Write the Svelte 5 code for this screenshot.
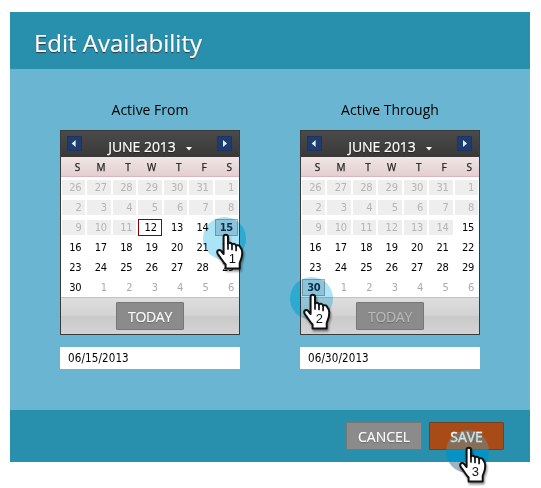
<script>
  const week = ['S', 'M', 'T', 'W', 'T', 'F', 'S'];
  const days = [26, 27, 28, 29, 30, 31, ...Array.from({ length: 30 }, (_, i) => i + 1), 1, 2, 3, 4, 5, 6];
  const calendars = [
    { label: 'Active From', date: '06/15/2013', past: 17, today: 17, selected: 20, disabled: false },
    { label: 'Active Through', date: '06/30/2013', past: 20, today: -1, selected: 35, disabled: true }
  ];
  const pointers = [
    { n: 1, x: 203, y: 217 },
    { n: 2, x: 290, y: 277 },
    { n: 3, x: 446, y: 430 }
  ];
</script>

<div class="page">
  <div class="dialog">
    <header><h1>Edit Availability</h1></header>
    <main>
      {#each calendars as c}
        <section>
          <div class="label">{c.label}</div>
          <div class="calendar">
            <div class="month">
              <button class="nav"><svg width="15" height="15"><path d="M8.6 4v7L4.7 7.5z" fill="#eee" /></svg></button>
              <span class="title">JUNE 2013<svg width="6" height="4"><path d="M0 0h6L3 3.5z" fill="#fff" /></svg></span>
              <button class="nav"><svg width="15" height="15"><path d="M6 4v7l4-3.5z" fill="#eee" /></svg></button>
            </div>
            <div class="week">{#each week as w}<span>{w}</span>{/each}</div>
            <div class="days">
              {#each days as d, i}
                <div class="slot">
                  <span class:past={i < c.past || (c.disabled && i < 20)} class:next={i > 35} class:today={i === c.today} class:selected={i === c.selected}>{d}</span>
                </div>
              {/each}
            </div>
            <div class="bottom"><button class="btn now" class:disabled={c.disabled}>TODAY</button></div>
          </div>
          <div class="input">{c.date}</div>
        </section>
      {/each}
    </main>
    <footer>
      <button class="btn">CANCEL</button>
      <button class="btn save">SAVE</button>
    </footer>
  </div>
  {#each pointers as p}
    <div class="disc disc{p.n}" style="left:{p.x}px;top:{p.y}px"></div>
    <div class="pointer" style="left:{p.x}px;top:{p.y}px">
      <svg width="54" height="62" viewBox="0 0 54 62">
        <g class="hand">
          <path d="M20.6 35V19.6C20.6 17 24.8 17 25 19.6V26.5C26.2 25.2 28.4 25.6 28.9 27.4C30.5 26.2 32.5 26.9 33 28.6C34.9 27.5 36.8 28.6 37.4 30.4C38.8 31.6 39.4 33.5 39.2 36.4C39.2 41 37.4 43.4 36.7 46V51.4H22.6V47.5C19.6 44.5 17.8 40.7 15.2 37.7C12.7 33.8 15.8 31.6 18 33.8L20.6 37Z" fill="#fff" stroke="#111" stroke-width="2" stroke-linejoin="round" />
          <path d="M25 26v6M29 27.5v5M33.1 29v4.5" stroke="#111" stroke-width="1.7" stroke-linecap="round" />
        </g>
        <text x="29.3" y="45.8" text-anchor="middle">{p.n}</text>
      </svg>
    </div>
  {/each}
</div>

<style>
  .page { position: relative; width: 541px; height: 488px; background: #fff; overflow: hidden; font-family: "Open Sans", sans-serif; box-sizing: border-box; padding: 12px 11px 26px 10px; }
  .dialog { height: 450px; display: flex; flex-direction: column; background: #6ab5d1; }
  header { height: 57px; background: #288fad; padding-left: 24px; box-sizing: border-box; }
  h1 { margin: 0; font-size: 24px; line-height: 62px; font-weight: 400; letter-spacing: -.02px; color: #fff; text-shadow: 0 1px 1px #333; -webkit-text-stroke: .2px #fff; }
  main { flex: 1; display: flex; gap: 60px; padding: 30px 50px 0; }
  section { width: 180px; }
  .label { height: 31px; line-height: 22px; font-size: 14px; text-align: center; color: #000; }
  .calendar { box-sizing: border-box; height: 205px; border: 1px solid #3b3b3b; background: #fff; }
  .month { height: 26px; box-sizing: border-box; display: flex; justify-content: space-between; align-items: flex-start; padding: 5px 7px 0 6px; background: linear-gradient(#4b4b4b, #383838); color: #fff; }
  .nav { display: block; width: 15px; height: 15px; padding: 0; border: 0; background: linear-gradient(#213c68, #1b3c75); box-shadow: inset 0 0 0 1px #1c3462; }
  .nav svg { display: block; }
  .title { font-size: 14px; line-height: 22px; text-shadow: 0 1px 1px #222; letter-spacing: -.05px; white-space: nowrap; padding-left: 1px; -webkit-text-stroke: .2px #fff; }
  .title svg { margin: 0 0 1px 10px; }
  .week { height: 20px; box-sizing: border-box; display: grid; grid-template-columns: repeat(7, 1fr); padding: 0 1px 0 0; background: linear-gradient(#f1e5e5, #e3cfcf); border-bottom: 1px solid #ddb6bd; font: 10px/21px "Open Sans", sans-serif; color: #222; }
  .week span { text-align: right; padding-right: 6px; -webkit-text-stroke: .25px #222; }
  .days { height: 120px; display: grid; grid-template-columns: repeat(7, 1fr); grid-template-rows: repeat(6, 20px); font: 11px/15px "DejaVu Sans Condensed", sans-serif; letter-spacing: -.25px; color: #000; }
  .slot { padding: 3px 1px 2px; }
  .slot span { display: block; height: 15px; padding-right: 4px; text-align: right; line-height: 16px; }
  .slot .past { background: #eee; color: #b4b4b4; }
  .slot .next { color: #aaa; }
  .slot .today { box-sizing: border-box; height: 17px; margin-top: -1px; border: 1px solid #8b0000; }
  .slot .selected { box-sizing: border-box; height: 17px; margin-top: -1px; border: 1px solid #a5a9ac; background: #d3dbe0; font-weight: 700; color: #0a3550; }
  .bottom { box-sizing: border-box; height: 37px; border-top: 1px solid #d4babd; background: linear-gradient(#dedede, #d2d2d2 50%, #c9c9c9 51%, #d4d4d4); display: flex; justify-content: center; padding-top: 4px; }
  .btn { box-sizing: border-box; width: 76px; height: 28px; padding: 0; border: 1px solid #777; border-radius: 1px; background: #8b8b8b; color: #fff; font: 14px/25px "Open Sans", sans-serif; letter-spacing: -.05px; text-shadow: 0 1px 1px #666; -webkit-text-stroke: .15px currentColor; }
  .now { width: 68px; letter-spacing: -.3px; }
  .disabled { color: #bbb; }
  .save { width: 75px; background: #a84b17; border-color: #71401f; text-shadow: none; -webkit-text-stroke: .4px #fff; }
  .input { margin-top: 12px; height: 22px; background: #fff; color: #000; padding-left: 8px; font: 11.5px/23px "DejaVu Sans Condensed", sans-serif; letter-spacing: .12px; }
  footer { height: 52px; box-sizing: border-box; background: #288fad; display: flex; justify-content: flex-end; gap: 7px; padding: 12px 26px 0 0; }
  .disc { position: absolute; width: 43px; height: 43px; border-radius: 50%; mix-blend-mode: multiply; }
  .disc1 { background: linear-gradient(90deg, #abe3f7 37px, #6cf0ff 37px); }
  .disc2 { background: linear-gradient(90deg, #6cf0ff 10px, #abe3f7 10px); }
  .disc3 { mix-blend-mode: normal; background: linear-gradient(rgba(70, 178, 215, .34) 20px, #0792c4 20px, #0792c4 32px, #9db4c2 32px); }
  .pointer { position: absolute; width: 54px; height: 62px; }
  .pointer svg { display: block; overflow: visible; }
  .hand { filter: drop-shadow(1px 2px 1px rgba(0, 0, 0, .45)); }
  text { font: 13px "Liberation Sans", sans-serif; fill: #111; }
</style>
